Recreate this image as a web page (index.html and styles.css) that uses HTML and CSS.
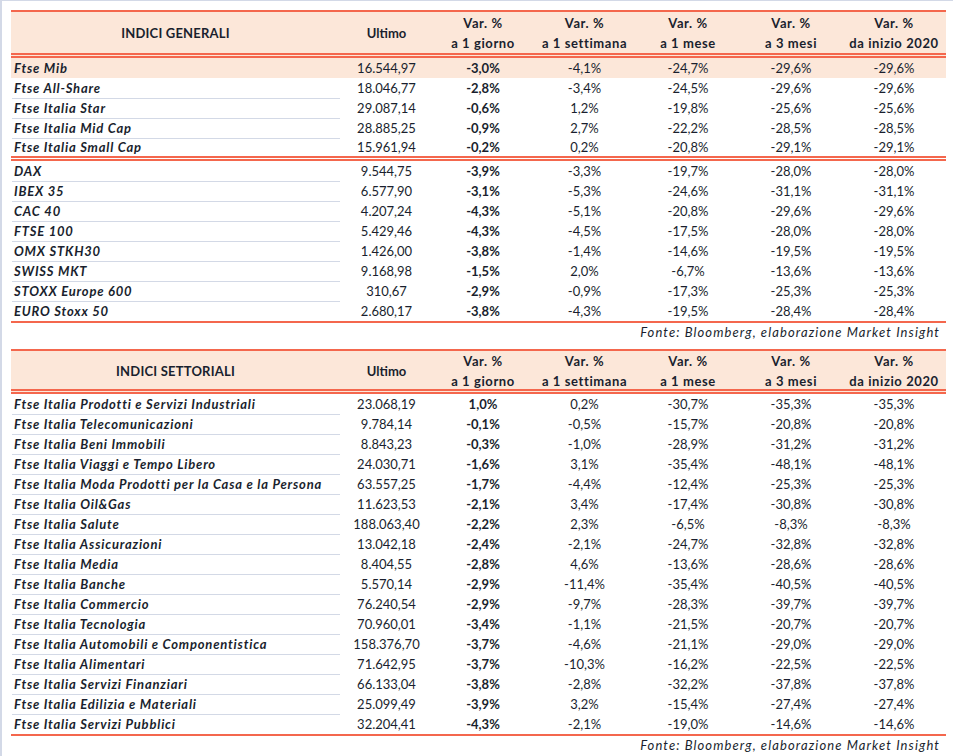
FILE: index.html
```html
<!DOCTYPE html>
<html lang="it">
<head>
<meta charset="utf-8">
<title>Indici</title>
<link rel="stylesheet" href="styles.css">
</head>
<body>
<div class="page">
  <section class="tbl">
    <div class="head h41">
      <div class="c name-h">INDICI GENERALI</div>
      <div class="c">Ultimo</div>
      <div class="c two">Var. %<br>a 1 giorno</div>
      <div class="c two">Var. %<br>a 1 settimana</div>
      <div class="c two">Var. %<br>a 1 mese</div>
      <div class="c two">Var. %<br>a 3 mesi</div>
      <div class="c two">Var. %<br>da inizio 2020</div>
    </div>
    <div class="row hl nosep"><div class="n">Ftse Mib</div><div class="v">16.544,97</div><div class="v b">-3,0%</div><div class="v">-4,1%</div><div class="v">-24,7%</div><div class="v">-29,6%</div><div class="v">-29,6%</div></div>
    <div class="row"><div class="n">Ftse All-Share</div><div class="v">18.046,77</div><div class="v b">-2,8%</div><div class="v">-3,4%</div><div class="v">-24,5%</div><div class="v">-29,6%</div><div class="v">-29,6%</div></div>
    <div class="row"><div class="n">Ftse Italia Star</div><div class="v">29.087,14</div><div class="v b">-0,6%</div><div class="v">1,2%</div><div class="v">-19,8%</div><div class="v">-25,6%</div><div class="v">-25,6%</div></div>
    <div class="row"><div class="n">Ftse Italia Mid Cap</div><div class="v">28.885,25</div><div class="v b">-0,9%</div><div class="v">2,7%</div><div class="v">-22,2%</div><div class="v">-28,5%</div><div class="v">-28,5%</div></div>
    <div class="row grpend"><div class="n">Ftse Italia Small Cap</div><div class="v">15.961,94</div><div class="v b">-0,2%</div><div class="v">0,2%</div><div class="v">-20,8%</div><div class="v">-29,1%</div><div class="v">-29,1%</div></div>
    <div class="row"><div class="n">DAX</div><div class="v">9.544,75</div><div class="v b">-3,9%</div><div class="v">-3,3%</div><div class="v">-19,7%</div><div class="v">-28,0%</div><div class="v">-28,0%</div></div>
    <div class="row"><div class="n">IBEX 35</div><div class="v">6.577,90</div><div class="v b">-3,1%</div><div class="v">-5,3%</div><div class="v">-24,6%</div><div class="v">-31,1%</div><div class="v">-31,1%</div></div>
    <div class="row"><div class="n">CAC 40</div><div class="v">4.207,24</div><div class="v b">-4,3%</div><div class="v">-5,1%</div><div class="v">-20,8%</div><div class="v">-29,6%</div><div class="v">-29,6%</div></div>
    <div class="row"><div class="n">FTSE 100</div><div class="v">5.429,46</div><div class="v b">-4,3%</div><div class="v">-4,5%</div><div class="v">-17,5%</div><div class="v">-28,0%</div><div class="v">-28,0%</div></div>
    <div class="row"><div class="n">OMX STKH30</div><div class="v">1.426,00</div><div class="v b">-3,8%</div><div class="v">-1,4%</div><div class="v">-14,6%</div><div class="v">-19,5%</div><div class="v">-19,5%</div></div>
    <div class="row"><div class="n">SWISS MKT</div><div class="v">9.168,98</div><div class="v b">-1,5%</div><div class="v">2,0%</div><div class="v">-6,7%</div><div class="v">-13,6%</div><div class="v">-13,6%</div></div>
    <div class="row"><div class="n">STOXX Europe 600</div><div class="v">310,67</div><div class="v b">-2,9%</div><div class="v">-0,9%</div><div class="v">-17,3%</div><div class="v">-25,3%</div><div class="v">-25,3%</div></div>
    <div class="row last nosep"><div class="n">EURO Stoxx 50</div><div class="v">2.680,17</div><div class="v b">-3,8%</div><div class="v">-4,3%</div><div class="v">-19,5%</div><div class="v">-28,4%</div><div class="v">-28,4%</div></div>
  </section>
  <p class="fonte">Fonte: Bloomberg, elaborazione Market Insight</p>

  <section class="tbl">
    <div class="head h39">
      <div class="c name-h">INDICI SETTORIALI</div>
      <div class="c">Ultimo</div>
      <div class="c two">Var. %<br>a 1 giorno</div>
      <div class="c two">Var. %<br>a 1 settimana</div>
      <div class="c two">Var. %<br>a 1 mese</div>
      <div class="c two">Var. %<br>a 3 mesi</div>
      <div class="c two">Var. %<br>da inizio 2020</div>
    </div>
    <div class="row"><div class="n">Ftse Italia Prodotti e Servizi Industriali</div><div class="v">23.068,19</div><div class="v b">1,0%</div><div class="v">0,2%</div><div class="v">-30,7%</div><div class="v">-35,3%</div><div class="v">-35,3%</div></div>
    <div class="row"><div class="n">Ftse Italia Telecomunicazioni</div><div class="v">9.784,14</div><div class="v b">-0,1%</div><div class="v">-0,5%</div><div class="v">-15,7%</div><div class="v">-20,8%</div><div class="v">-20,8%</div></div>
    <div class="row"><div class="n">Ftse Italia Beni Immobili</div><div class="v">8.843,23</div><div class="v b">-0,3%</div><div class="v">-1,0%</div><div class="v">-28,9%</div><div class="v">-31,2%</div><div class="v">-31,2%</div></div>
    <div class="row"><div class="n">Ftse Italia Viaggi e Tempo Libero</div><div class="v">24.030,71</div><div class="v b">-1,6%</div><div class="v">3,1%</div><div class="v">-35,4%</div><div class="v">-48,1%</div><div class="v">-48,1%</div></div>
    <div class="row"><div class="n">Ftse Italia Moda Prodotti per la Casa e la Persona</div><div class="v">63.557,25</div><div class="v b">-1,7%</div><div class="v">-4,4%</div><div class="v">-12,4%</div><div class="v">-25,3%</div><div class="v">-25,3%</div></div>
    <div class="row"><div class="n">Ftse Italia Oil&amp;Gas</div><div class="v">11.623,53</div><div class="v b">-2,1%</div><div class="v">3,4%</div><div class="v">-17,4%</div><div class="v">-30,8%</div><div class="v">-30,8%</div></div>
    <div class="row"><div class="n">Ftse Italia Salute</div><div class="v">188.063,40</div><div class="v b">-2,2%</div><div class="v">2,3%</div><div class="v">-6,5%</div><div class="v">-8,3%</div><div class="v">-8,3%</div></div>
    <div class="row"><div class="n">Ftse Italia Assicurazioni</div><div class="v">13.042,18</div><div class="v b">-2,4%</div><div class="v">-2,1%</div><div class="v">-24,7%</div><div class="v">-32,8%</div><div class="v">-32,8%</div></div>
    <div class="row"><div class="n">Ftse Italia Media</div><div class="v">8.404,55</div><div class="v b">-2,8%</div><div class="v">4,6%</div><div class="v">-13,6%</div><div class="v">-28,6%</div><div class="v">-28,6%</div></div>
    <div class="row"><div class="n">Ftse Italia Banche</div><div class="v">5.570,14</div><div class="v b">-2,9%</div><div class="v">-11,4%</div><div class="v">-35,4%</div><div class="v">-40,5%</div><div class="v">-40,5%</div></div>
    <div class="row"><div class="n">Ftse Italia Commercio</div><div class="v">76.240,54</div><div class="v b">-2,9%</div><div class="v">-9,7%</div><div class="v">-28,3%</div><div class="v">-39,7%</div><div class="v">-39,7%</div></div>
    <div class="row"><div class="n">Ftse Italia Tecnologia</div><div class="v">70.960,01</div><div class="v b">-3,4%</div><div class="v">-1,1%</div><div class="v">-21,5%</div><div class="v">-20,7%</div><div class="v">-20,7%</div></div>
    <div class="row"><div class="n">Ftse Italia Automobili e Componentistica</div><div class="v">158.376,70</div><div class="v b">-3,7%</div><div class="v">-4,6%</div><div class="v">-21,1%</div><div class="v">-29,0%</div><div class="v">-29,0%</div></div>
    <div class="row"><div class="n">Ftse Italia Alimentari</div><div class="v">71.642,95</div><div class="v b">-3,7%</div><div class="v">-10,3%</div><div class="v">-16,2%</div><div class="v">-22,5%</div><div class="v">-22,5%</div></div>
    <div class="row"><div class="n">Ftse Italia Servizi Finanziari</div><div class="v">66.133,04</div><div class="v b">-3,8%</div><div class="v">-2,8%</div><div class="v">-32,2%</div><div class="v">-37,8%</div><div class="v">-37,8%</div></div>
    <div class="row"><div class="n">Ftse Italia Edilizia e Materiali</div><div class="v">25.099,49</div><div class="v b">-3,9%</div><div class="v">3,2%</div><div class="v">-15,4%</div><div class="v">-27,4%</div><div class="v">-27,4%</div></div>
    <div class="row last nosep"><div class="n">Ftse Italia Servizi Pubblici</div><div class="v">32.204,41</div><div class="v b">-4,3%</div><div class="v">-2,1%</div><div class="v">-19,0%</div><div class="v">-14,6%</div><div class="v">-14,6%</div></div>
  </section>
  <p class="fonte">Fonte: Bloomberg, elaborazione Market Insight</p>
</div>
</body>
</html>
```

FILE: styles.css
```css
html, body {
  margin: 0;
  padding: 0;
  background: #ffffff;
}

body {
  font-family: "Lato", "Liberation Sans", sans-serif;
  font-size: 13px;
  color: #1a1f2e;
}

.page {
  width: 953px;
  height: 756px;
  box-sizing: border-box;
  border-left: 2px solid #d3d9e7;
  border-top: 1px solid #d3d9e7;
  padding: 9px 0 0 9px;
  overflow: hidden;
}

.tbl {
  width: 935px;
  border-top: 2px solid #f4674d;
  border-bottom: 2px solid #f4674d;
}

.head,
.row {
  display: grid;
  grid-template-columns: 329px 93px 100px 103px 104px 102px 104px;
  box-sizing: border-box;
}

.head {
  background: #fce7d9;
  border-bottom: 5px double #f4674d;
  font-weight: 700;
}

.h41 { height: 46px; }
.h39 { height: 43px; }

.head .c {
  display: flex;
  align-items: center;
  justify-content: center;
  text-align: center;
  line-height: 20px;
}

.head .two {
  letter-spacing: 0.6px;
}

.head .name-h {
  letter-spacing: 0.2px;
}

.row {
  height: 20px;
  line-height: 20px;
}

.row.grpend {
  height: 23px;
  line-height: 19px;
  border-bottom: 5px double #f4674d;
}

.row.hl {
  background: #fce7d9;
}

.n {
  font-weight: 700;
  font-style: italic;
  letter-spacing: 0.8px;
  padding-left: 2px;
  margin-left: 1px;
  border-bottom: 1px solid #d3d9e6;
  white-space: nowrap;
}

.row.nosep .n,
.row.grpend .n {
  border-bottom: none;
}

.v {
  text-align: center;
  white-space: nowrap;
}

.v.b {
  font-weight: 700;
}

.fonte {
  margin: 0 0 8px 0;
  width: 935px;
  text-align: right;
  box-sizing: border-box;
  padding-right: 6px;
  font-style: italic;
  letter-spacing: 1.1px;
  line-height: 18px;
  font-size: 13px;
}
```
